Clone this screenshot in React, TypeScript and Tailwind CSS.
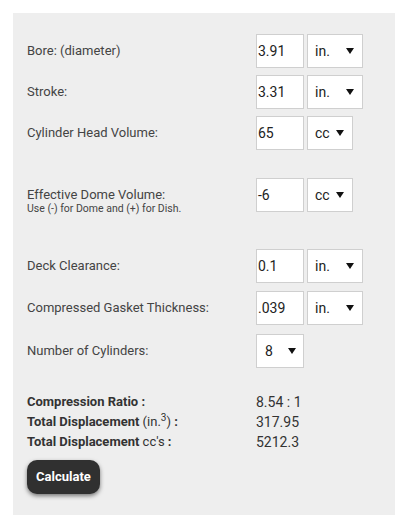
import React from 'react';

const Caret = () => (
  <svg width="8" height="6" viewBox="0 0 8 6" className="shrink-0">
    <path d="M0 0 H8 L4 6 Z" fill="#111" />
  </svg>
);

const NumBox = ({ value }: { value: string }) => (
  <div className="w-[48px] h-[34px] bg-white border border-[#cfcfcf] flex items-center pl-[1px] text-[14px] text-[#222]">
    {value}
  </div>
);

const UnitSelect = ({ unit, width }: { unit: string; width: string }) => (
  <div className={`${width} h-[34px] bg-white border border-[#cfcfcf] flex items-center justify-between pl-[7px] pr-[8px] text-[14px] text-[#222]`}>
    <span>{unit}</span>
    <Caret />
  </div>
);

const Row = ({ label, value, unit, wide, className = '' }: any) => (
  <div className={`flex items-center ${className}`}>
    <div className="w-[229px] text-[13px] text-[#444]">{label}</div>
    <div className="flex gap-[3px]">
      <NumBox value={value} />
      <UnitSelect unit={unit} width={wide ? 'w-[56px]' : 'w-[46px]'} />
    </div>
  </div>
);

const App: React.FC = () => {
  return (
    <div className="w-[400px] h-[521px] bg-white pt-[13px] pl-[13px]" style={{ fontFamily: 'Roboto, "Liberation Sans", sans-serif' }}>
      <div className="w-[382px] h-[502px] bg-[#eeeeee] pt-[21px] pl-[14px]">
        <Row label="Bore: (diameter)" value="3.91" unit="in." wide />
        <Row label="Stroke:" value="3.31" unit="in." wide className="mt-[7px]" />
        <Row label="Cylinder Head Volume:" value="65" unit="cc" className="mt-[7px]" />

        <div className="flex items-center mt-[28px]">
          <div className="w-[229px] relative">
            <div className="text-[13px] text-[#444]">Effective Dome Volume:</div>
            <div className="absolute left-0 top-[16px] text-[10.5px] text-[#444] whitespace-nowrap">Use (-) for Dome and (+) for Dish.</div>
          </div>
          <div className="flex gap-[3px]">
            <NumBox value="-6" />
            <UnitSelect unit="cc" width="w-[46px]" />
          </div>
        </div>

        <Row label="Deck Clearance:" value="0.1" unit="in." wide className="mt-[37px]" />
        <Row label="Compressed Gasket Thickness:" value=".039" unit="in." wide className="mt-[8px]" />

        <div className="flex items-center mt-[9px]">
          <div className="w-[229px] text-[13px] text-[#444]">Number of Cylinders:</div>
          <div className="w-[48px] h-[34px] bg-white border border-[#cfcfcf] flex items-center justify-between pl-[8px] pr-[7px] text-[14px] text-[#222]">
            <span>8</span>
            <Caret />
          </div>
        </div>

        <div className="mt-[24px] text-[13px] text-[#333] leading-[20px]">
          <div className="flex">
            <div className="w-[229px] font-bold">Compression Ratio :</div>
            <div className="text-[14px]">8.54 : 1</div>
          </div>
          <div className="flex">
            <div className="w-[229px]">
              <span className="font-bold">Total Displacement</span> (in.<sup className="text-[10px]">3</sup>) <span className="font-bold">:</span>
            </div>
            <div className="text-[14px]">317.95</div>
          </div>
          <div className="flex">
            <div className="w-[229px]">
              <span className="font-bold">Total Displacement</span> cc's <span className="font-bold">:</span>
            </div>
            <div className="text-[14px]">5212.3</div>
          </div>
        </div>

        <button className="mt-[8px] w-[73px] h-[34px] rounded-[10px] bg-[#303030] text-white font-bold text-[13px] shadow-[0_2px_4px_rgba(0,0,0,0.5)]">
          Calculate
        </button>
      </div>
    </div>
  );
};

export default App;
